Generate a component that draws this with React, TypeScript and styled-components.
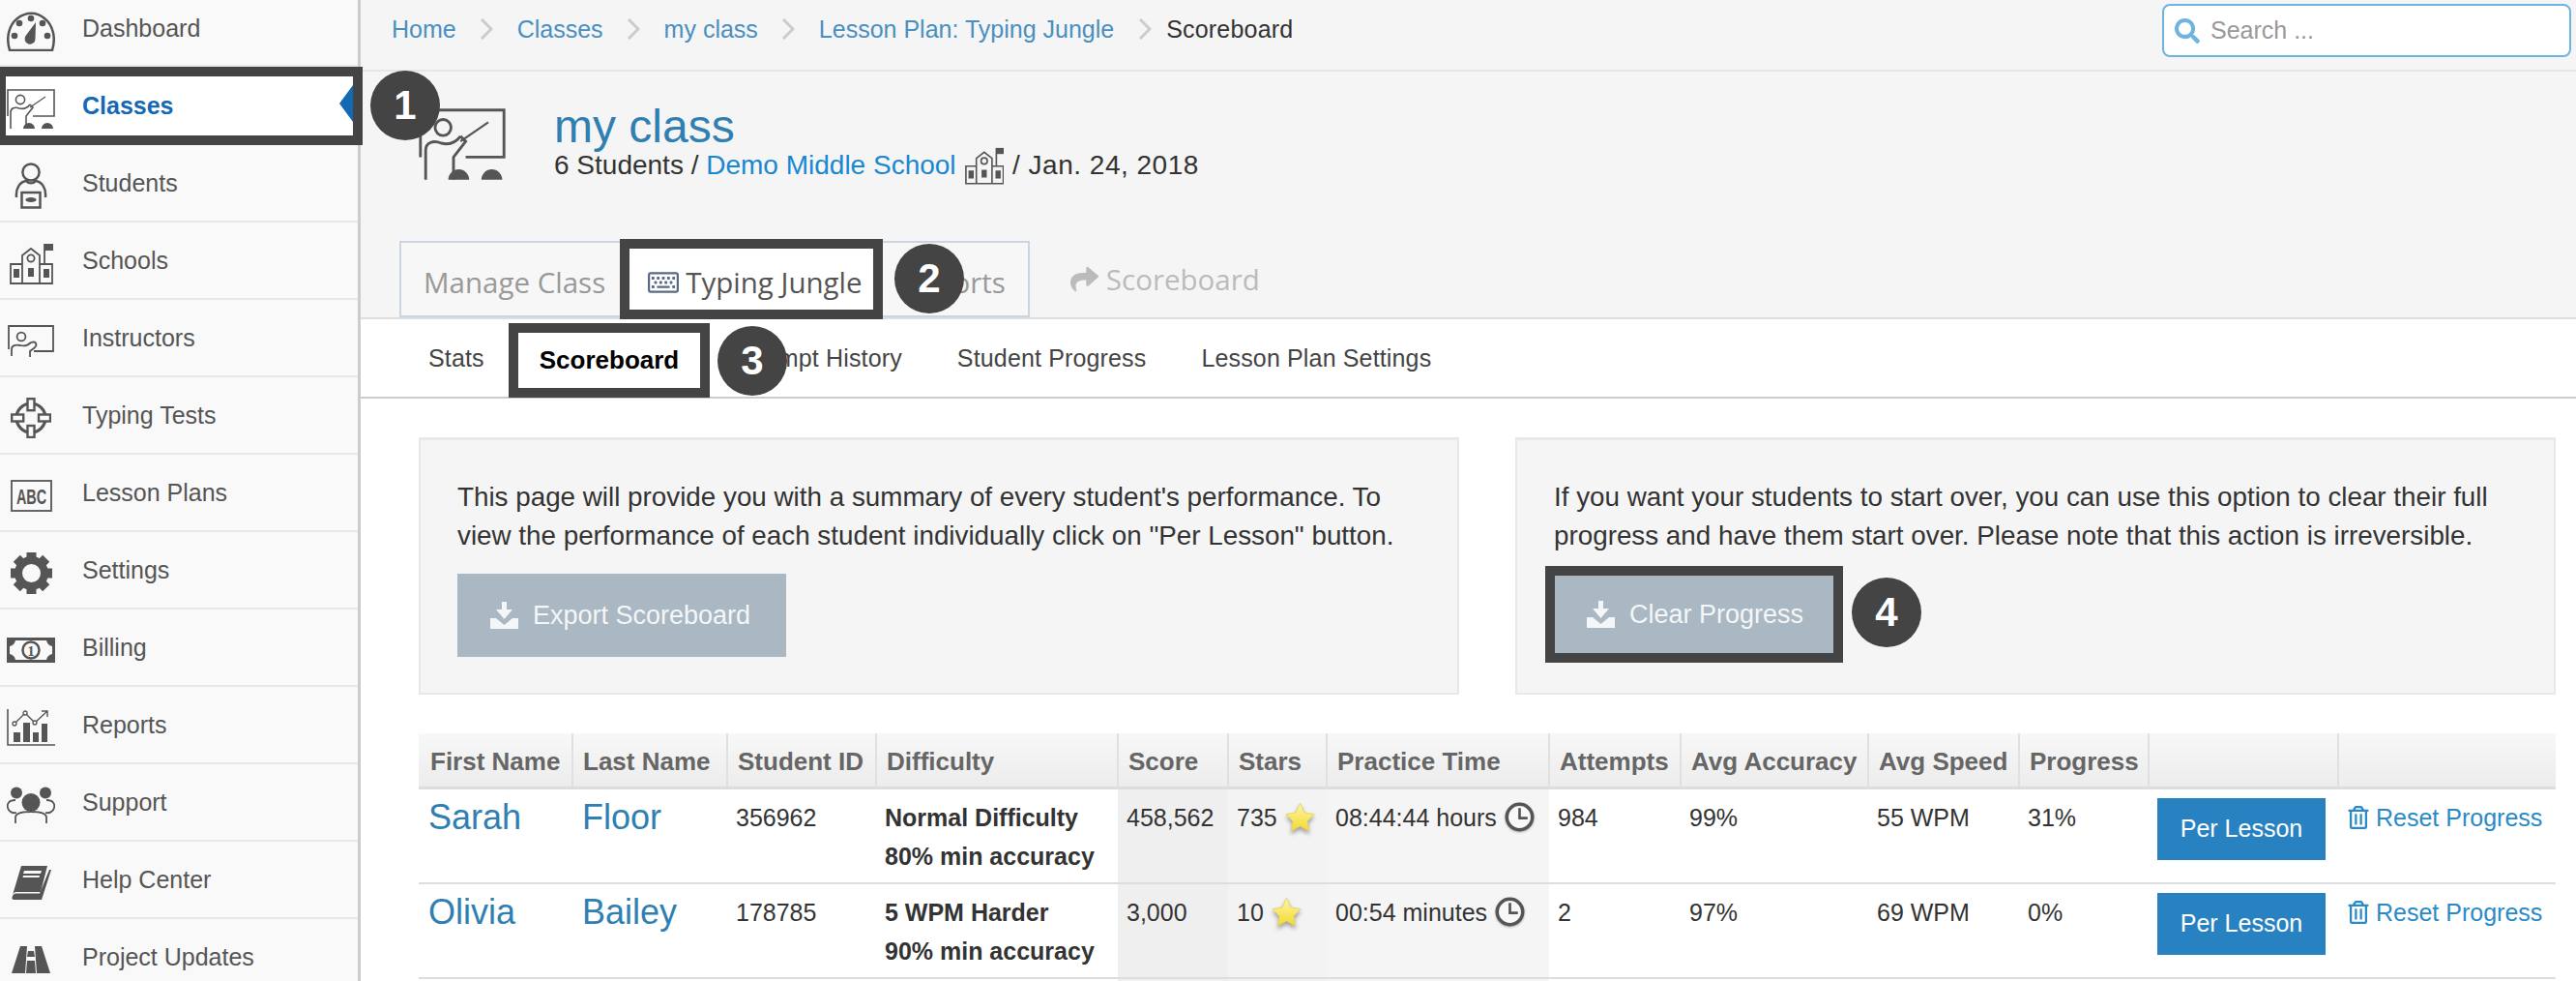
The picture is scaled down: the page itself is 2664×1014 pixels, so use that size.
import React from "react";
import styled, {createGlobalStyle} from "styled-components";
import {FaSearch, FaShare, FaRegKeyboard, FaRegTrashAlt} from "react-icons/fa";

const GlobalStyle = createGlobalStyle`
  html, body {
    margin: 0;
    padding: 0;
    background: #ffffff;
  }
  body {
    font-family: "Liberation Sans", Arial, sans-serif;
    font-size: 25px;
    color: #333333;
  }
  * {
    box-sizing: border-box;
  }
`;

const Page = styled.div`
  position: relative;
  display: flex;
  width: 2664px;
  height: 1014px;
  overflow: hidden;
`;
const Sidebar = styled.nav`
  flex: none;
  width: 373px;
  height: 1040px;
  margin-top: -11px;
  background: #f9f9f9;
  border-right: 3px solid #cccccc;
`;
const NavRow = styled.div<{$active?: boolean}>`
  position: relative;
  display: flex;
  align-items: center;
  height: ${(p) => (p.$active ? "81px" : "80px")};
  width: ${(p) => (p.$active ? "375px" : "100%")};
  z-index: ${(p) => (p.$active ? 2 : 1)};
  background: ${(p) => (p.$active ? "#ffffff" : "transparent")};
  border: ${(p) => (p.$active ? "10px solid #444444" : "none")};
  border-left-width: ${(p) => (p.$active ? "6px" : "0")};
  border-bottom: ${(p) => (p.$active ? "10px solid #444444" : "2px solid #e8e8e8")};
  color: ${(p) => (p.$active ? "#1469b5" : "#555555")};
  font-weight: ${(p) => (p.$active ? "bold" : "normal")};
  &:first-child {
    padding-top: 2px;
  }
  ${(p) =>
    p.$active &&
    `&::after {
      content: "";
      position: absolute;
      right: 0;
      top: 9px;
      border-top: 19px solid transparent;
      border-bottom: 19px solid transparent;
      border-right: 14px solid #1469b5;
    }`}
`;
const NavIcon = styled.span<{$active?: boolean}>`
  display: flex;
  flex: none;
  justify-content: center;
  width: 64px;
  margin-left: ${(p) => (p.$active ? "-6px" : "0")};
  margin-top: 6px;
  margin-right: 21px;
`;
const Main = styled.main`
  flex: 1;
  min-width: 0;
`;
const TopBar = styled.div`
  display: flex;
  align-items: center;
  justify-content: space-between;
  height: 74px;
  padding: 0 5px 12px 32px;
  background: #f5f5f5;
  border-bottom: 2px solid #e6e6e6;
`;
const Crumbs = styled.div`
  display: flex;
  align-items: center;
  gap: 24.5px;
  color: #333333;
`;
const CrumbLink = styled.a`
  color: #4a8fc0;
`;
const CrumbCurrent = styled.span`
  margin-left: -9px;
  letter-spacing: 0.2px;
`;
const SearchBox = styled.label`
  display: flex;
  align-items: center;
  gap: 11px;
  width: 423px;
  height: 55px;
  margin-top: 3px;
  padding-left: 11px;
  background: #ffffff;
  border: 2px solid #6fb3e0;
  border-radius: 8px;
  color: #6fb3e0;
`;
const SearchInput = styled.input`
  flex: 1;
  min-width: 0;
  border: 0;
  outline: 0;
  padding: 0;
  font-family: "Liberation Sans", Arial, sans-serif;
  font-size: 25px;
  &::placeholder {
    color: #999999;
    opacity: 1;
  }
`;
const Band = styled.div`
  height: 256px;
  background: #f5f5f5;
  border-bottom: 2px solid #dddddd;
`;
const ClassHeader = styled.div`
  display: flex;
  height: 173px;
  padding: 38px 0 0 60px;
`;
const ClassText = styled.div`
  margin-left: 50px;
  margin-top: -5px;
`;
const ClassTitle = styled.h1`
  margin: 0 0 -3px;
  font-size: 48px;
  line-height: 48px;
  font-weight: normal;
  color: #2f7fb2;
`;
const ClassMeta = styled.div`
  display: flex;
  align-items: center;
  gap: 9px;
  font-size: 28px;
  line-height: 34px;
  color: #333333;
  white-space: pre;
`;
const MetaDate = styled.span`
  letter-spacing: 0.5px;
`;
const MetaLink = styled.a`
  color: #1a87d0;
`;
const TabRow = styled.div`
  display: flex;
  align-items: stretch;
  height: 81px;
  margin-left: 40px;
  font-family: "Open Sans", sans-serif;
  font-size: 29.5px;
`;
const TabGroup = styled.div`
  display: flex;
  align-items: center;
  margin-top: 2px;
  background: #f7f7f7;
  border: 2px solid #c9d6e2;
  color: #999999;
`;
const PlainTab = styled.div<{$afterActive?: boolean}>`
  padding: 6px ${(p) => (p.$afterActive ? "23px" : "15px")} 0 ${(p) => (p.$afterActive ? "20px" : "23px")};
  white-space: nowrap;
`;
const ActiveTab = styled.div`
  display: flex;
  align-items: center;
  align-self: flex-start;
  gap: 7px;
  height: 83px;
  margin-top: -4px;
  padding: 6px 11px 0 19px;
  background: #ffffff;
  border: 10px solid #444444;
  color: #555555;
  white-space: nowrap;
`;
const LinkTab = styled.div`
  display: flex;
  align-items: center;
  gap: 8px;
  margin-left: 42px;
  margin-top: 2px;
  color: #bbbbbb;
`;
const SubNav = styled.div`
  display: flex;
  align-items: center;
  height: 82px;
  padding-left: 42px;
  background: #ffffff;
  border-bottom: 2px solid #cccccc;
  color: #444444;
  letter-spacing: 0.15px;
`;
const SubItem = styled.div`
  padding: 0 28.5px;
  white-space: nowrap;
  &:first-child {
    padding: 0 28px;
  }
`;
const SubActive = styled.div`
  display: flex;
  align-items: center;
  height: 77px;
  margin: 5px -3px 0;
  padding: 0 22px;
  background: #ffffff;
  border: 10px solid #444444;
  color: #000000;
  font-size: 26px;
  font-weight: bold;
  letter-spacing: 0;
  white-space: nowrap;
`;
const Panels = styled.div`
  display: flex;
  gap: 58px;
  padding: 40px 21px 0 60px;
`;
const Panel = styled.section`
  flex: 1;
  height: 266px;
  padding: 39px 38px 0;
  background: #f5f5f5;
  border: 2px solid #e8e8e8;
  border-top-width: 3px;
`;
const PanelText = styled.p`
  margin: 0 0 19px;
  font-size: 27.8px;
  line-height: 40px;
  color: #333333;
  white-space: nowrap;
`;
const GreyButton = styled.button<{$marked?: boolean}>`
  display: flex;
  align-items: center;
  gap: 15px;
  width: ${(p) => (p.$marked ? "308px" : "340px")};
  height: ${(p) => (p.$marked ? "100px" : "86px")};
  margin: ${(p) => (p.$marked ? "-8px 0 0 -9px" : "0")};
  padding: 0 0 0 ${(p) => (p.$marked ? "33px" : "34px")};
  background: #a9b8c2;
  border: ${(p) => (p.$marked ? "10px solid #444444" : "0")};
  color: #f4f6f7;
  font-family: "Liberation Sans", Arial, sans-serif;
  font-size: 27px;
  white-space: nowrap;
`;
const ScoreTable = styled.table`
  width: 2210px;
  margin: 40px 0 0 60px;
  table-layout: fixed;
  border-collapse: collapse;
`;
const HeadCell = styled.th`
  height: 56px;
  padding: 4px 0 0 10px;
  background: linear-gradient(#f8f8f8, #ececec);
  border-right: 2px solid #e0e0e0;
  border-bottom: 3px solid #dddddd;
  color: #666666;
  font-size: 26px;
  font-weight: bold;
  text-align: left;
  white-space: nowrap;
  &:first-child {
    padding-left: 12px;
  }
  &:last-child {
    border-right: 0;
  }
`;
const Row = styled.tr`
  height: 98px;
  border-bottom: 2px solid #dddddd;
`;
const Cell = styled.td<{$shade?: string}>`
  padding: 9px 0 7px 9px;
  vertical-align: top;
  line-height: 40px;
  background: ${(p) => p.$shade || "transparent"};
  white-space: nowrap;
`;
const CellLine = styled.div`
  display: flex;
  align-items: center;
  gap: 8px;
`;
const NameLink = styled.a`
  margin-left: 1px;
  color: #2f7fb2;
  font-size: 36px;
`;
const Strong = styled.div`
  font-weight: bold;
  color: #333333;
`;
const BlueButton = styled.button`
  display: block;
  width: 174px;
  height: 64px;
  background: #2882c2;
  border: 0;
  color: #ffffff;
  font-family: "Liberation Sans", Arial, sans-serif;
  font-size: 25px;
`;
const ResetLink = styled.a`
  display: flex;
  align-items: center;
  gap: 6px;
  color: #2a8ac8;
`;
const Badge = styled.div<{$x: number; $y: number}>`
  position: absolute;
  left: ${(p) => p.$x - 36}px;
  top: ${(p) => p.$y - 36}px;
  z-index: 5;
  display: flex;
  align-items: center;
  justify-content: center;
  width: 72px;
  height: 72px;
  border-radius: 50%;
  background: #444444;
  color: #ffffff;
  font-size: 42px;
  font-weight: bold;
`;
const StarGlyph = styled.svg`
  flex: none;
  filter: drop-shadow(0 3px 2px rgba(0, 0, 0, 0.35));
`;
const ClockGlyph = styled.svg`
  flex: none;
  filter: drop-shadow(0 1px 1px rgba(0, 0, 0, 0.3));
`;

const ink = "#555555";

function Gauge() {
  return (
    <svg width="50" height="41" viewBox="0 0 50 41">
      <path d="M3 40C-1 27 2 14 11 7C20 0 31 0 39 7C48 14 51 27 47 40Z" fill="none" stroke={ink} strokeWidth="2.5" />
      <g fill={ink}>
        <circle cx="25" cy="7" r="3.3" />
        <circle cx="13" cy="12" r="3.3" />
        <circle cx="37" cy="12" r="3.3" />
        <circle cx="8" cy="25" r="3.3" />
        <circle cx="42" cy="25" r="3.3" />
        <path d="M30 11L29.5 28A5.5 5.5 0 1 1 19.5 25Z" />
      </g>
    </svg>
  );
}
function Classroom({size = 50}: {size?: number}) {
  return (
    <svg width={size} height={(size * 41) / 50} viewBox="0 0 50 41" fill="none" stroke={ink} strokeWidth="1.6">
      <path d="M1 28V1H49V28H27" />
      <circle cx="14" cy="11" r="4.6" />
      <path d="M4 41V24C4 20 8 18 13 20C17 21 21 20 24 16M24 16L27 19L20 28V41" />
      <path d="M24 19L40 8" strokeWidth="1.2" />
      <path d="M17 41A6 6 0 0 1 29 41ZM36 41A6 6 0 0 1 48 41Z" fill={ink} stroke="none" />
    </svg>
  );
}
function Student() {
  return (
    <svg width="34" height="48" viewBox="0 0 34 48" fill="none" stroke={ink} strokeWidth="2.5">
      <circle cx="17" cy="10" r="8.6" />
      <path d="M2 36C1 26 6 20 12 19C15 22 19 22 22 19C28 20 33 26 32 36" />
      <rect x="7.5" y="31" width="19" height="15.5" />
      <ellipse cx="17" cy="38.5" rx="5.5" ry="2.5" fill={ink} stroke="none" />
    </svg>
  );
}
function School({scale = 1}: {scale?: number}) {
  return (
    <svg width={45 * scale} height={43 * scale} viewBox="0 0 45 43" fill="none" stroke={ink} strokeWidth="1.8">
      <path d="M1 42V22H13V42ZM13 42V13L22 6L31 13V42ZM31 42V22H44V42ZM1 42H44" />
      <circle cx="22" cy="16" r="3.6" />
      <path d="M36 22V1" />
      <path d="M36 1H45V8H36Z" fill={ink} stroke="none" />
      <path d="M4 27H10V36H4ZM19 26H25V35H19ZM35 27H41V36H35Z" fill={ink} stroke="none" />
    </svg>
  );
}
function Instructor() {
  return (
    <svg width="48" height="33" viewBox="0 0 48 33" fill="none" stroke={ink} strokeWidth="1.8">
      <path d="M1 25V1H47V27H27" />
      <circle cx="14" cy="12" r="4.4" />
      <path d="M4 32V25C4 21 8 20 13 21C17 22 21 21 24 18C30 16 31 21 27 24L23 27V33" />
    </svg>
  );
}
function Crosshair() {
  return (
    <svg width="42" height="42" viewBox="0 0 42 42" fill="none" stroke={ink}>
      <circle cx="21" cy="21" r="15" strokeWidth="3.2" />
      <g fill="#f9f9f9" strokeWidth="2.4">
        <rect x="17.5" y="1.2" width="7" height="12" />
        <rect x="17.5" y="29" width="7" height="12" />
        <rect x="1.2" y="17.5" width="12" height="7" />
        <rect x="29" y="17.5" width="12" height="7" />
      </g>
    </svg>
  );
}
function AbcBox() {
  return (
    <svg width="43" height="33" viewBox="0 0 43 33">
      <rect x="1" y="1" width="41" height="31" fill="none" stroke={ink} strokeWidth="1.8" />
      <text transform="translate(21.5 25) scale(0.8 1.25)" textAnchor="middle" fontFamily="Liberation Sans" fontWeight="bold" fontSize="18" fill={ink}>
        ABC
      </text>
    </svg>
  );
}
function Gear() {
  const teeth = [0, 45, 90, 135, 180, 225, 270, 315];
  return (
    <svg width="43" height="43" viewBox="0 0 43 43" fill={ink}>
      {teeth.map((a) => (
        <rect key={a} x="16.5" y="0" width="10" height="9" transform={`rotate(${a} 21.5 21.5)`} />
      ))}
      <circle cx="21.5" cy="21.5" r="13.5" fill="none" stroke={ink} strokeWidth="8" />
    </svg>
  );
}
function Bill() {
  return (
    <svg width="50" height="26" viewBox="0 0 50 26">
      <rect width="50" height="26" fill={ink} />
      <path d="M9 3H41Q42 8 47 9V17Q42 18 41 23H9Q8 18 3 17V9Q8 8 9 3Z" fill="#f9f9f9" />
      <circle cx="25" cy="13" r="8.5" fill="#f9f9f9" stroke={ink} strokeWidth="2.5" />
      <text x="25" y="18.5" textAnchor="middle" fontFamily="Liberation Serif" fontWeight="bold" fontSize="15" fill={ink}>
        1
      </text>
    </svg>
  );
}
function ChartIcon() {
  return (
    <svg width="50" height="38" viewBox="0 0 50 38" fill="none" stroke={ink}>
      <path d="M1 0V37H50" strokeWidth="1.6" />
      <path d="M7 34V24H14V34ZM17 34V14H24V34ZM27 34V24H33V34ZM36 34V15H42V34Z" fill={ink} stroke="none" />
      <path d="M8 15L19 4L29 14L42 2M36 2H42V8" strokeWidth="1.4" />
      <g fill="#f9f9f9" strokeWidth="1.3">
        <circle cx="8" cy="15" r="2" />
        <circle cx="19" cy="4" r="2" />
        <circle cx="29" cy="14" r="2" />
      </g>
    </svg>
  );
}
function People() {
  return (
    <svg width="50" height="38" viewBox="0 0 50 38" fill="none" stroke={ink} strokeWidth="1.8">
      <g fill={ink} stroke="none">
        <circle cx="10" cy="6.5" r="6" />
        <circle cx="40" cy="6.5" r="6" />
        <circle cx="25" cy="16.5" r="9.5" />
      </g>
      <path d="M9 38V32C9 28 16 26 25 26C34 26 41 28 41 32V38" />
      <path d="M9 14C2 14 0 18 1 22C2 26 6 28 10 27M41 14C48 14 50 18 49 22C48 26 44 28 40 27" />
    </svg>
  );
}
function Book() {
  return (
    <svg width="42" height="35" viewBox="0 0 42 35" fill={ink}>
      <path d="M11 0H38L31 27H6Q3 27 2 30L11 0Z" />
      <path d="M2 31Q3 28 6 28.5H30L40 4H42L32 35H4Q0 35 2 31Z" />
      <path d="M14 5H32L31 8H13ZM13 10H30L29.5 12H12.5Z" fill="#f9f9f9" />
    </svg>
  );
}
function Road() {
  return (
    <svg width="40" height="28" viewBox="0 0 40 28" fill={ink}>
      <path d="M9 0H16L14 28H0ZM24 0H31L40 28H26ZM17 5H23L24 11H16ZM16 15H24L25 28H15Z" />
    </svg>
  );
}
function Tray() {
  return (
    <svg width="29" height="28" viewBox="0 0 29 28" fill="#f4f6f7">
      <path d="M12 0H17V8H23L14.5 18L6 8H12Z" />
      <path d="M0 17H6L14.5 24L23 17H29V28H0Z" />
    </svg>
  );
}
function Star() {
  return (
    <StarGlyph width="31" height="31" viewBox="0 0 31 31">
      <defs>
        <linearGradient id="starFill" x1="0" y1="0" x2="0" y2="1">
          <stop offset="0" stopColor="#fff6a8" />
          <stop offset="1" stopColor="#f3d92c" />
        </linearGradient>
      </defs>
      <path d="M15.5 1L20 11L30 12.5L23 20L24.5 30L15.5 25L6.5 30L8 20L1 12.5L11 11Z" fill="url(#starFill)" stroke="#e3cf6a" strokeWidth="0.8" />
    </StarGlyph>
  );
}
function Clock() {
  return (
    <ClockGlyph width="31" height="31" viewBox="0 0 30 30" fill="#f8f8f8" stroke="#555555">
      <circle cx="15" cy="15" r="12.8" strokeWidth="3.4" />
      <path d="M15 6V16H23" fill="none" strokeWidth="2.6" />
    </ClockGlyph>
  );
}
function Chevron() {
  return (
    <svg width="14" height="22" viewBox="0 0 14 22" fill="none" stroke="#cccccc" strokeWidth="3">
      <path d="M2 1L12 11L2 21" />
    </svg>
  );
}

const navItems: {label: string; icon: React.ReactNode; active?: boolean}[] = [
  {label: "Dashboard", icon: <Gauge />},
  {label: "Classes", icon: <Classroom />, active: true},
  {label: "Students", icon: <Student />},
  {label: "Schools", icon: <School />},
  {label: "Instructors", icon: <Instructor />},
  {label: "Typing Tests", icon: <Crosshair />},
  {label: "Lesson Plans", icon: <AbcBox />},
  {label: "Settings", icon: <Gear />},
  {label: "Billing", icon: <Bill />},
  {label: "Reports", icon: <ChartIcon />},
  {label: "Support", icon: <People />},
  {label: "Help Center", icon: <Book />},
  {label: "Project Updates", icon: <Road />},
];

const columns = [
  {title: "First Name", width: 159},
  {title: "Last Name", width: 160},
  {title: "Student ID", width: 154},
  {title: "Difficulty", width: 250},
  {title: "Score", width: 114},
  {title: "Stars", width: 102},
  {title: "Practice Time", width: 230},
  {title: "Attempts", width: 136},
  {title: "Avg Accuracy", width: 194},
  {title: "Avg Speed", width: 156},
  {title: "Progress", width: 134},
  {title: "", width: 196},
  {title: "", width: 225},
];

const students = [
  {first: "Sarah", last: "Floor", id: "356962", level: "Normal Difficulty", min: "80% min accuracy", score: "458,562", stars: "735", time: "08:44:44 hours", attempts: "984", accuracy: "99%", speed: "55 WPM", progress: "31%"},
  {first: "Olivia", last: "Bailey", id: "178785", level: "5 WPM Harder", min: "90% min accuracy", score: "3,000", stars: "10", time: "00:54 minutes", attempts: "2", accuracy: "97%", speed: "69 WPM", progress: "0%"},
];

const scoreShade = "#efefef";
const starShade = "#f3f3f3";
const timeShade = "#f5f5f5";

export default function App() {
  return (
    <Page>
      <GlobalStyle />
      <Sidebar>
        {navItems.map((item) => (
          <NavRow key={item.label} $active={item.active}>
            <NavIcon $active={item.active}>{item.icon}</NavIcon>
            {item.label}
          </NavRow>
        ))}
      </Sidebar>
      <Main>
        <TopBar>
          <Crumbs>
            <CrumbLink>Home</CrumbLink>
            <Chevron />
            <CrumbLink>Classes</CrumbLink>
            <Chevron />
            <CrumbLink>my class</CrumbLink>
            <Chevron />
            <CrumbLink>Lesson Plan: Typing Jungle</CrumbLink>
            <Chevron />
            <CrumbCurrent>Scoreboard</CrumbCurrent>
          </Crumbs>
          <SearchBox>
            <FaSearch size={26} />
            <SearchInput placeholder="Search ..." />
          </SearchBox>
        </TopBar>
        <Band>
          <ClassHeader>
            <Classroom size={90} />
            <ClassText>
              <ClassTitle>my class</ClassTitle>
              <ClassMeta>
                <span>
                  6 Students / <MetaLink>Demo Middle School</MetaLink>
                </span>
                <School scale={0.9} />
                <MetaDate>/ Jan. 24, 2018</MetaDate>
              </ClassMeta>
            </ClassText>
          </ClassHeader>
          <TabRow>
            <TabGroup>
              <PlainTab>Manage Class</PlainTab>
              <ActiveTab>
                <FaRegKeyboard size={32} color="#5a6a85" />
                Typing Jungle
              </ActiveTab>
              <PlainTab $afterActive>Reports</PlainTab>
            </TabGroup>
            <LinkTab>
              <FaShare size={29} />
              Scoreboard
            </LinkTab>
          </TabRow>
        </Band>
        <SubNav>
          <SubItem>Stats</SubItem>
          <SubActive>Scoreboard</SubActive>
          <SubItem>Attempt History</SubItem>
          <SubItem>Student Progress</SubItem>
          <SubItem>Lesson Plan Settings</SubItem>
        </SubNav>
        <Panels>
          <Panel>
            <PanelText>
              This page will provide you with a summary of every student's performance. To
              <br />
              view the performance of each student individually click on "Per Lesson" button.
            </PanelText>
            <GreyButton>
              <Tray />
              Export Scoreboard
            </GreyButton>
          </Panel>
          <Panel>
            <PanelText>
              If you want your students to start over, you can use this option to clear their full
              <br />
              progress and have them start over. Please note that this action is irreversible.
            </PanelText>
            <GreyButton $marked>
              <Tray />
              Clear Progress
            </GreyButton>
          </Panel>
        </Panels>
        <ScoreTable>
          <colgroup>
            {columns.map((col, i) => (
              <col key={i} width={col.width} />
            ))}
          </colgroup>
          <thead>
            <tr>
              {columns.map((col, i) => (
                <HeadCell key={i}>{col.title}</HeadCell>
              ))}
            </tr>
          </thead>
          <tbody>
            {students.map((s) => (
              <Row key={s.id}>
                <Cell>
                  <NameLink>{s.first}</NameLink>
                </Cell>
                <Cell>
                  <NameLink>{s.last}</NameLink>
                </Cell>
                <Cell>{s.id}</Cell>
                <Cell>
                  <Strong>{s.level}</Strong>
                  <Strong>{s.min}</Strong>
                </Cell>
                <Cell $shade={scoreShade}>{s.score}</Cell>
                <Cell $shade={starShade}>
                  <CellLine>
                    {s.stars}
                    <Star />
                  </CellLine>
                </Cell>
                <Cell $shade={timeShade}>
                  <CellLine>
                    {s.time}
                    <Clock />
                  </CellLine>
                </Cell>
                <Cell>{s.attempts}</Cell>
                <Cell>{s.accuracy}</Cell>
                <Cell>{s.speed}</Cell>
                <Cell>{s.progress}</Cell>
                <Cell>
                  <BlueButton>Per Lesson</BlueButton>
                </Cell>
                <Cell>
                  <ResetLink>
                    <FaRegTrashAlt size={24} />
                    Reset Progress
                  </ResetLink>
                </Cell>
              </Row>
            ))}
            <Row>
              {columns.map((col, i) => (
                <Cell key={i} $shade={i === 4 ? scoreShade : i === 5 ? starShade : i === 6 ? timeShade : undefined} />
              ))}
            </Row>
          </tbody>
        </ScoreTable>
      </Main>
      <Badge $x={419} $y={109}>1</Badge>
      <Badge $x={961} $y={288}>2</Badge>
      <Badge $x={778} $y={373}>3</Badge>
      <Badge $x={1951} $y={633}>4</Badge>
    </Page>
  );
}
